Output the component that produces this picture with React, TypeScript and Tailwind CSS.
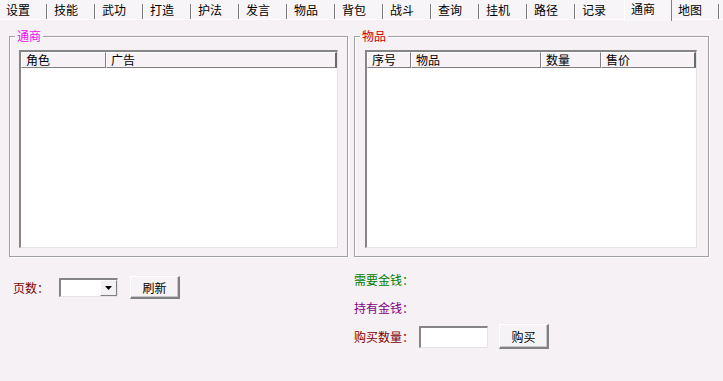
const tabs = ["设置", "技能", "武功", "打造", "护法", "发言", "物品", "背包", "战斗", "查询", "挂机", "路径", "记录", "通商", "地图"];
const active = 13;

function Tab({ label, index }: { label: string; index: number }) {
  if (index === active) {
    return (
      <div className="w-[48px] h-[21px] -mb-px flex pl-[6px] pt-[2px] bg-[#f9f6f9] border-l border-white border-r border-r-[#808080] relative z-10">
        <span>{label}</span>
      </div>
    );
  }
  const hideSep = index === active - 1;
  return (
    <div className="w-[48px] h-full flex pl-[6px] pt-[3px]">
      <span>{label}</span>
      <div
        className={`ml-auto mt-[1px] w-[2px] h-[15px] ${
          hideSep ? "" : "border-l border-[#7a7a7a] border-r border-r-white"
        }`}
      />
    </div>
  );
}

function Header({ cols }: { cols: { label: string; w?: string }[] }) {
  return (
    <div className="flex h-[16px] bg-[#f6f2f6]">
      {cols.map((c, i) => (
        <div
          key={c.label}
          className={`${c.w ?? "flex-1"} h-full flex items-center pl-[4px] leading-none border-t border-l border-white border-b border-b-[#808080] ${
            i === cols.length - 1 ? "border-r-2 border-r-[#6a6a6a]" : "border-r border-r-[#808080]"
          }`}
        >
          {c.label}
        </div>
      ))}
    </div>
  );
}

function ListView({ w, ml, cols }: { w: string; ml: string; cols: { label: string; w?: string }[] }) {
  return (
    <div className={`${w} ${ml} h-[198px] flex flex-col bg-white border-t-2 border-l-2 border-[#858585] border-r border-b border-r-[#e4e4e4] border-b-[#e4e4e4]`}>
      <Header cols={cols} />
    </div>
  );
}

function Button({ label, h }: { label: string; h: string }) {
  return (
    <button className={`w-[50px] ${h} bg-[#f5f3f5] border-t border-l border-white border-r-2 border-b-2 border-r-[#808080] border-b-[#808080] shadow-[inset_-1px_-1px_0_#c8c8c8] text-[12px] text-black leading-none pt-px`}>
      {label}
    </button>
  );
}

export default function App() {
  return (
    <div className="w-[723px] h-[381px] overflow-hidden bg-[#f5f1f5] text-[12px] text-black font-['Noto_Sans_CJK_SC','Noto_Sans',sans-serif]">
      {/* tab strip */}
      <div className="flex h-[20px] bg-[#f8f5f8] border-b border-white leading-[14px]">
        {tabs.map((t, i) => (
          <Tab key={t} label={t} index={i} />
        ))}
      </div>

      {/* group boxes */}
      <div className="flex mt-[9px] ml-[9px] gap-[6px]">
        <fieldset className="w-[339px] h-[228px] border border-[#a0a0a0] shadow-[inset_1px_1px_0_#fff,1px_1px_0_#fff] pt-[7px]">
          <legend className="ml-[5px] px-[2px] leading-[14px] bg-[#f5f1f5] text-[#f010f0]">通商</legend>
          <ListView
            w="w-[319px]"
            ml="ml-[9px]"
            cols={[
              { label: "角色", w: "w-[85px]" },
              { label: "广告" },
            ]}
          />
        </fieldset>
        <fieldset className="w-[355px] h-[228px] border border-[#a0a0a0] shadow-[inset_1px_1px_0_#fff,1px_1px_0_#fff] pt-[7px]">
          <legend className="ml-[5px] px-[2px] leading-[14px] bg-[#f5f1f5] text-[#cc0000]">物品</legend>
          <ListView
            w="w-[332px]"
            ml="ml-[10px]"
            cols={[
              { label: "序号", w: "w-[44px]" },
              { label: "物品", w: "w-[130px]" },
              { label: "数量", w: "w-[60px]" },
              { label: "售价" },
            ]}
          />
        </fieldset>
      </div>

      {/* bottom controls */}
      <div className="flex">
        <div className="w-[354px] pl-[13px] pt-[19px] flex items-start">
          <div className="flex items-center h-[23px]">
            <span className="w-[46px] text-[#800000]">页数：</span>
            <div className="w-[59px] h-[19px] flex bg-white border-t-2 border-l-2 border-[#858585] border-r border-b border-r-[#e4e4e4] border-b-[#e4e4e4]">
              <div className="flex-1" />
              <div className="w-[17px] h-full flex items-center justify-center bg-[#f3f1f3] border-t border-l border-white border-r border-b border-r-[#808080] border-b-[#808080]">
                <svg width="7" height="4" viewBox="0 0 7 4">
                  <path d="M0 0h7L3.5 4z" fill="#000" />
                </svg>
              </div>
            </div>
            <div className="ml-[12px]">
              <Button label="刷新" h="h-[23px]" />
            </div>
          </div>
        </div>

        <div className="flex flex-col pt-[15px] leading-[16px]">
          <span className="text-[#008000]">需要金钱：</span>
          <span className="mt-[12px] text-[#800080]">持有金钱：</span>
          <div className="mt-[8px] flex items-center h-[25px]">
            <span className="w-[65px] text-[#800000]">购买数量：</span>
            <div className="w-[69px] h-[22px] bg-white border-t-2 border-l-2 border-[#858585] border-r border-b border-r-[#e4e4e4] border-b-[#e4e4e4]" />
            <div className="ml-[11px]">
              <Button label="购买" h="h-[25px]" />
            </div>
          </div>
        </div>
      </div>
    </div>
  );
}
